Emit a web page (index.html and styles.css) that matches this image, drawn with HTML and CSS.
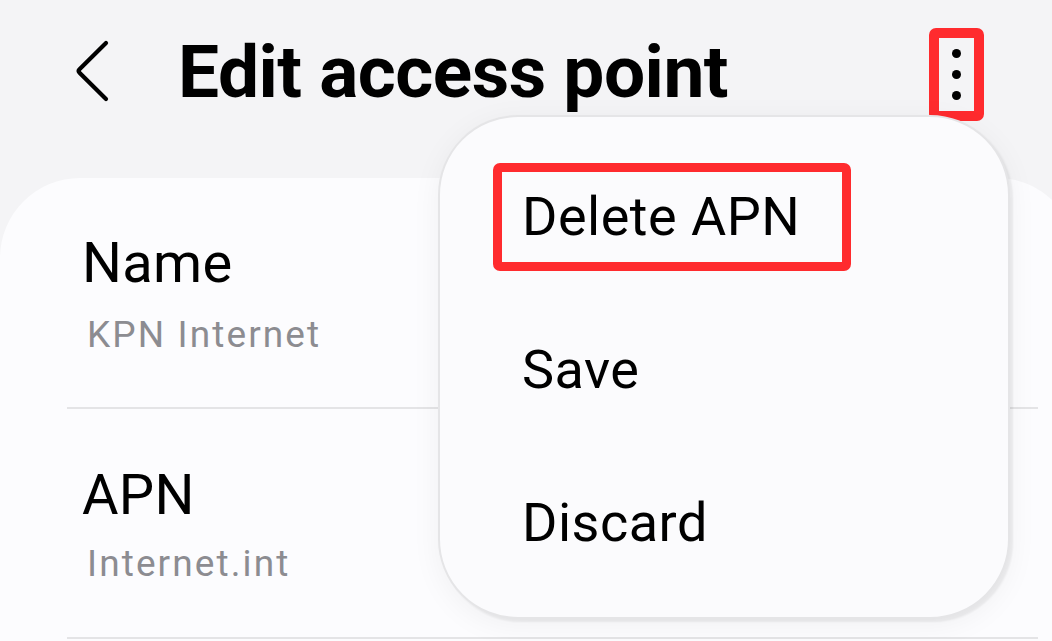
FILE: index.html
```html
<!DOCTYPE html>
<html lang="en">
<head>
<meta charset="utf-8">
<title>Edit access point</title>
<link rel="stylesheet" href="styles.css">
</head>
<body>
<div class="screen">
  <header class="appbar">
    <button class="back" aria-label="Back">
      <svg width="40" height="66" viewBox="0 0 40 66"><path d="M34 5 L7.5 31.3 Q5.8 33 7.5 34.7 L34 61" fill="none" stroke="#000" stroke-width="4.2" stroke-linecap="round" stroke-linejoin="round"/></svg>
    </button>
    <h1 class="title">Edit access point</h1>
    <button class="more highlight" aria-label="More options">
      <span class="dot"></span><span class="dot"></span><span class="dot"></span>
    </button>
  </header>

  <main class="card">
    <div class="list">
      <div class="row">
        <div class="row-title">Name</div>
        <div class="row-sub">KPN Internet</div>
      </div>
      <div class="row row-last">
        <div class="row-title">APN</div>
        <div class="row-sub">Internet.int</div>
      </div>
    </div>
  </main>

  <ul class="menu">
    <li class="menu-item">Delete APN<span class="mark"></span></li>
    <li class="menu-item">Save</li>
    <li class="menu-item">Discard</li>
  </ul>
</div>
</body>
</html>
```
FILE: styles.css
```css
* { box-sizing: border-box; }
html, body {
  margin: 0;
  padding: 0;
}
body {
  background: #f4f4f6;
  font-family: Roboto, "Noto Sans", "Liberation Sans", sans-serif;
  color: #000;
}
.screen {
  position: relative;
  width: 1052px;
  height: 641px;
  overflow: hidden;
  background: #f4f4f6;
}
.appbar {
  height: 178px;
  display: flex;
  align-items: flex-start;
  padding: 0 68px 0 72px;
}
.back {
  margin: 38px 0 0 0;
  padding: 0;
  border: 0;
  background: none;
  width: 40px;
  height: 66px;
  display: block;
}
.back svg { display: block; }
.title {
  margin: 36px 0 0 66px;
  font-size: 73px;
  line-height: 73px;
  font-weight: 700;
  letter-spacing: -0.5px;
  white-space: nowrap;
}
.more {
  margin: 28px 0 0 auto;
  width: 55px;
  height: 93px;
  background: none;
  padding: 0;
  display: flex;
  flex-direction: column;
  align-items: center;
  justify-content: center;
  gap: 12px;
}
.highlight {
  border: 10px solid #ff2b2e;
  border-radius: 7px;
}
.dot {
  width: 9px;
  height: 9px;
  border-radius: 50%;
  background: #000;
}
.card {
  width: 1077px;
  height: 463px;
  background: #fcfcfe;
  border-radius: 80px 80px 0 0;
}
.list {
  margin: 0 39px 0 67px;
}
.row {
  padding: 53px 0 50px 15px;
  border-bottom: 2px solid #e4e4e6;
}
.row-last {
  padding-top: 54px;
  padding-bottom: 51px;
}
.row-title {
  font-size: 56px;
  line-height: 64px;
  letter-spacing: 0.3px;
}
.row-sub {
  margin-top: 18px;
  padding-left: 5px;
  font-size: 37px;
  line-height: 44px;
  letter-spacing: 2.1px;
  color: #8c8c91;
}
.row-last .row-sub {
  margin-top: 15px;
}
.menu {
  position: absolute;
  left: 438px;
  top: 115px;
  width: 572px;
  height: 504px;
  margin: 0;
  padding: 23px 0 0 0;
  list-style: none;
  background: #fbfbfd;
  border: 2px solid #e5e5e7;
  border-radius: 80px;
  box-shadow: 3px 3px 2px rgba(0,0,0,0.06), 0 6px 30px rgba(0,0,0,0.05);
}
.menu-item {
  position: relative;
  height: 153px;
  padding: 46.5px 0 0 82px;
  font-size: 54px;
  line-height: 60px;
  letter-spacing: 0.5px;
  white-space: nowrap;
}
.mark {
  position: absolute;
  left: 53px;
  top: 23px;
  width: 358px;
  height: 108px;
  border: 9px solid #ff2b2e;
  border-radius: 7px;
}
```
